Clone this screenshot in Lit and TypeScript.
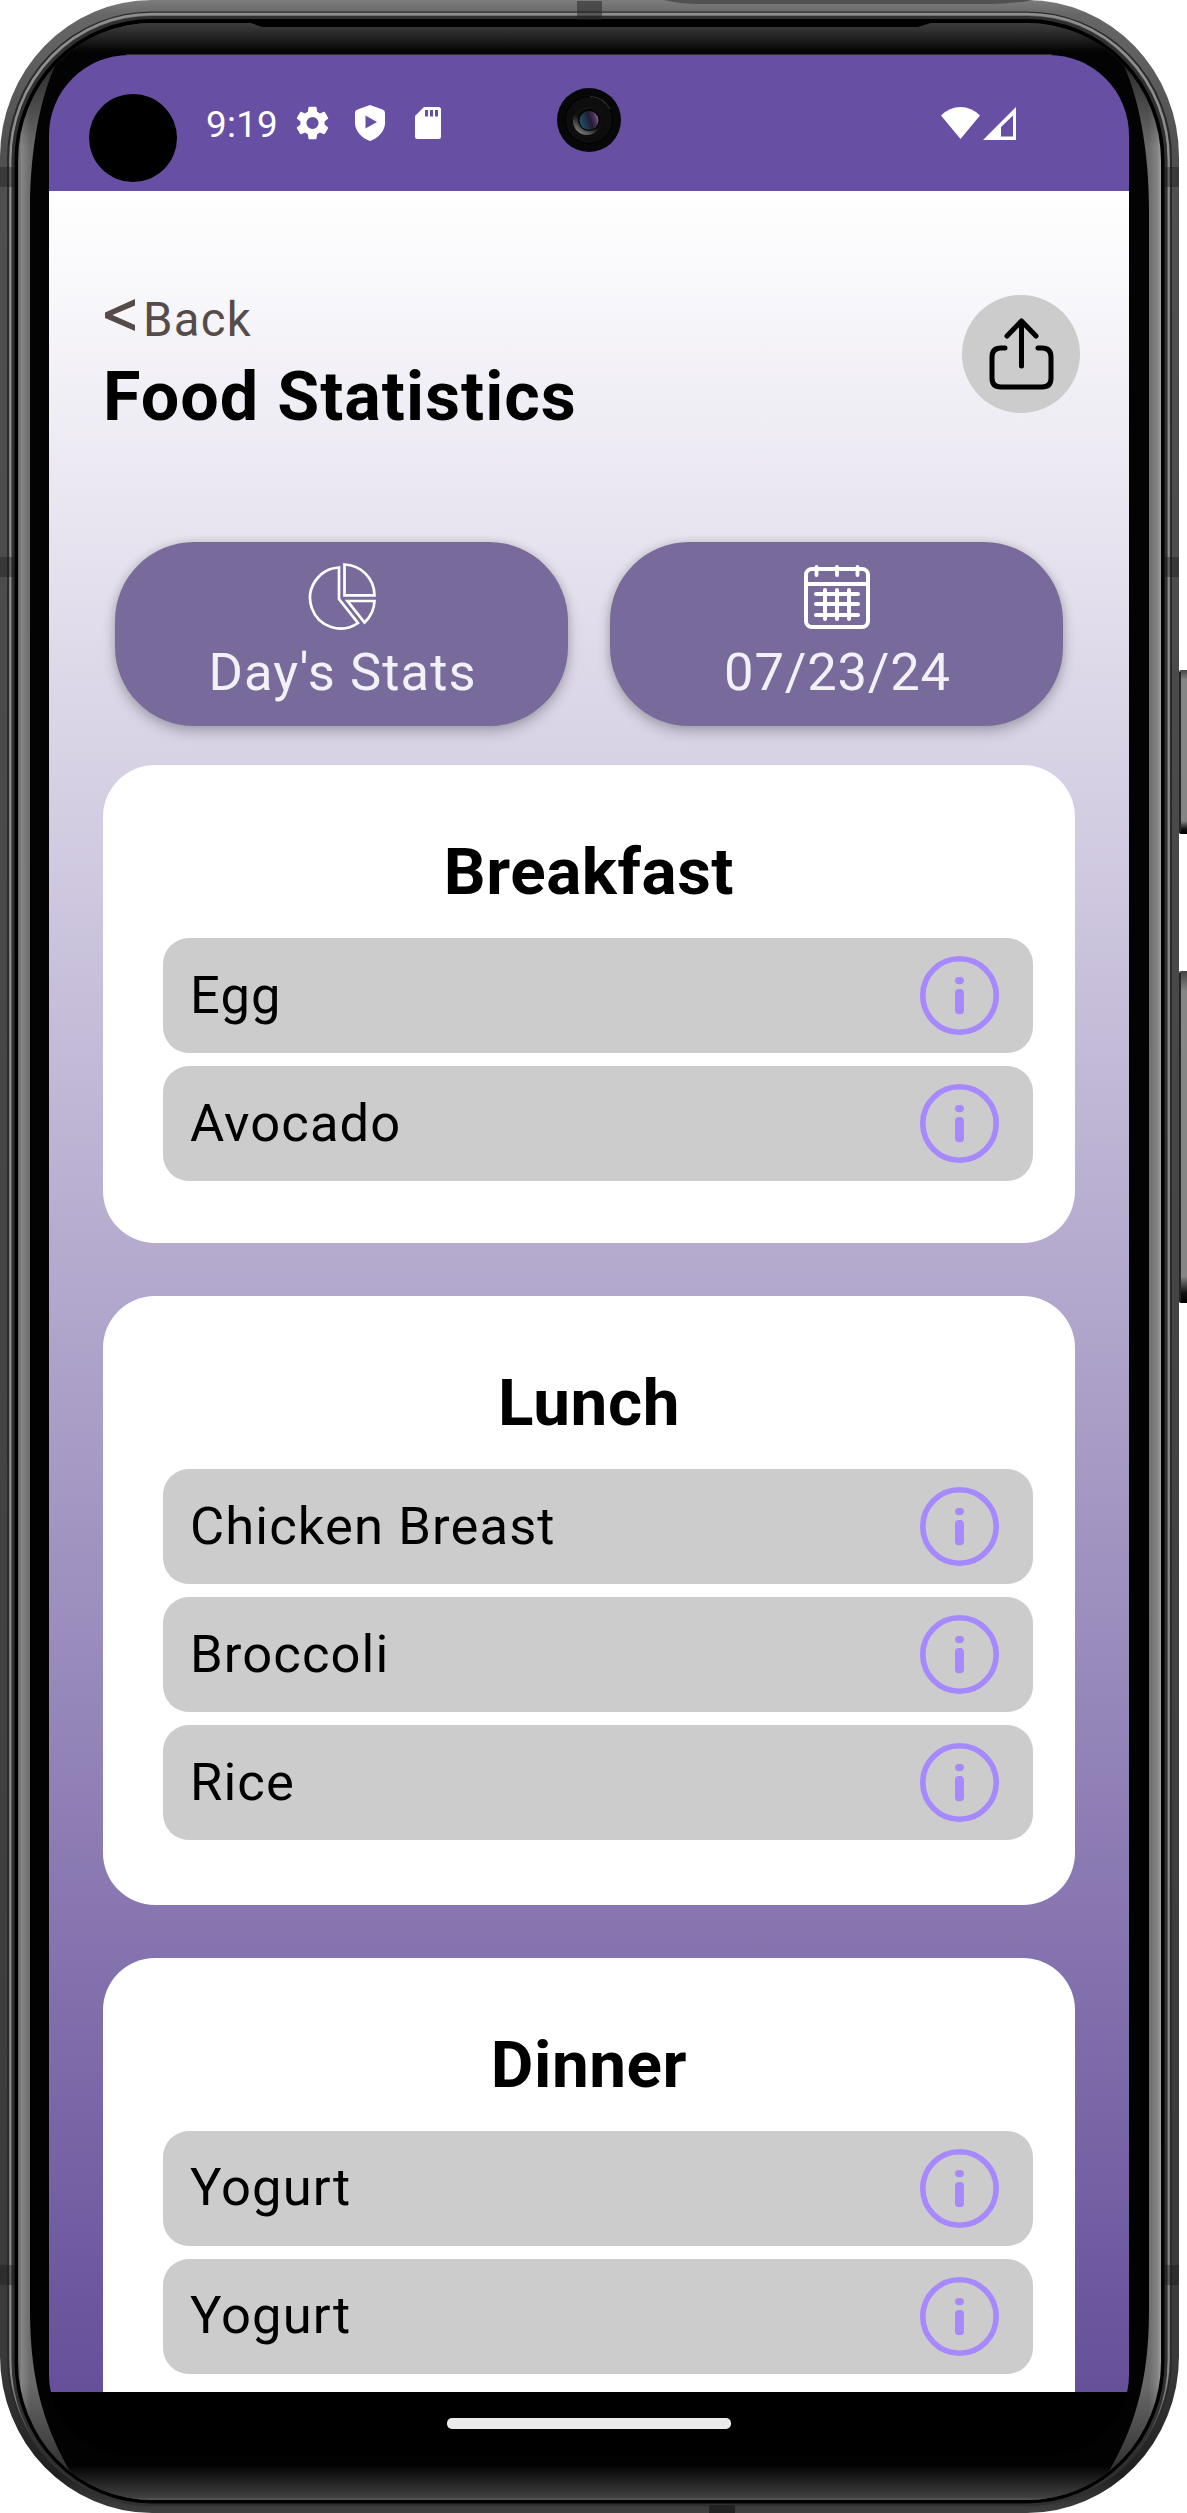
import { LitElement, html, css, svg } from "lit";
import { customElement, property } from "lit/decorators.js";

interface Meal {
  name: string;
  size: string;
  foods: string[];
}

const MEALS: Meal[] = [
  { name: "Breakfast", size: "two", foods: ["Egg", "Avocado"] },
  { name: "Lunch", size: "three", foods: ["Chicken Breast", "Broccoli", "Rice"] },
  { name: "Dinner", size: "three", foods: ["Yogurt", "Yogurt"] },
];

@customElement("device-frame")
class DeviceFrame extends LitElement {
  static styles = css`
    :host { display: block; width: 1187px; height: 2513px; }
    .art { display: block; }
  `;

  render() {
    const bands = [167, 557, 2265];
    return html`<svg class="art" width="1187" height="2513" viewBox="0 0 1187 2513">
      <defs>
        <linearGradient id="shell" x1="0" y1="0" x2="0" y2="1">
          <stop offset="0" stop-color="#7c7c7c" /><stop offset="0.006" stop-color="#666" />
          <stop offset="0.06" stop-color="#505050" /><stop offset="0.94" stop-color="#3a3a3a" />
          <stop offset="0.985" stop-color="#1f1f1f" /><stop offset="1" stop-color="#414141" />
        </linearGradient>
        <linearGradient id="rim" x1="0" y1="0" x2="0" y2="1">
          <stop offset="0" stop-color="#8f8f8f" /><stop offset="0.95" stop-color="#8a8a8a" />
          <stop offset="0.985" stop-color="#333" /><stop offset="1" stop-color="#2c2c2c" />
        </linearGradient>
        <linearGradient id="side" gradientUnits="userSpaceOnUse" x1="18" y1="0" x2="1161" y2="0">
          <stop offset="0" stop-color="#606060" /><stop offset="0.003" stop-color="#858585" />
          <stop offset="0.011" stop-color="#6a6a6a" /><stop offset="0.989" stop-color="#6a6a6a" />
          <stop offset="0.997" stop-color="#858585" /><stop offset="1" stop-color="#a0a0a0" />
        </linearGradient>
        <linearGradient id="fade" gradientUnits="userSpaceOnUse" x1="0" y1="50" x2="0" y2="2480">
          <stop offset="0" stop-color="#000" stop-opacity="0.7" /><stop offset="0.04" stop-color="#000" stop-opacity="0" />
          <stop offset="0.96" stop-color="#000" stop-opacity="0" /><stop offset="1" stop-color="#000" stop-opacity="0.6" />
        </linearGradient>
        <linearGradient id="glass" gradientUnits="userSpaceOnUse" x1="0" y1="23" x2="0" y2="2500">
          <stop offset="0" stop-color="#3d3d3d" /><stop offset="0.0052" stop-color="#262626" />
          <stop offset="0.0115" stop-color="#030303" /><stop offset="0.986" stop-color="#020202" />
          <stop offset="0.9915" stop-color="#1d1d1d" /><stop offset="1" stop-color="#454545" />
        </linearGradient>
        <linearGradient id="key" x1="0" y1="0" x2="0" y2="1">
          <stop offset="0" stop-color="#444" /><stop offset="0.06" stop-color="#858585" />
          <stop offset="0.92" stop-color="#858585" /><stop offset="0.97" stop-color="#111" />
          <stop offset="1" stop-color="#000" />
        </linearGradient>
        <clipPath id="face"><rect x="18" y="23" width="1143" height="2477" rx="134" ry="138" /></clipPath>
        <clipPath id="body"><rect x="0" y="0" width="1179" height="2513" rx="152" ry="157" /></clipPath>
      </defs>
      <rect x="0" y="0" width="1179" height="2513" rx="152" ry="157" fill="url(#shell)" />
      <g clip-path="url(#body)">
        <path d="M664 0H1034Q1010 4 990 4H700Q680 4 664 0Z" fill="#505050" />
        <rect x="8" y="12.5" width="1163" height="2492" rx="144" ry="146" fill="none" stroke="#2b2b2b" stroke-width="2" />
        <rect x="10.5" y="14" width="1158" height="2489.5" rx="141" ry="145" fill="none" stroke="url(#rim)" stroke-width="2.5" />
        <rect x="13.5" y="18" width="1152" height="2486" rx="138" ry="142" fill="none" stroke="#303030" stroke-width="4" />
        <rect x="16" y="20.5" width="1147" height="2481.5" rx="136" ry="140" fill="#000" stroke="#000" stroke-width="3" />
        ${bands.map((y) => svg`<rect x="0" y=${y} width="15" height="20" fill="#171717" opacity="0.38" /><rect x="1164" y=${y} width="15" height="20" fill="#171717" opacity="0.38" />`)}
        <rect x="577" y="1" width="25" height="19" fill="#222" opacity="0.5" />
        <rect x="709" y="2505" width="26" height="8" fill="#222" />
      </g>
      <g clip-path="url(#face)">
        <rect x="18" y="23" width="1143" height="2477" fill="url(#side)" />
        <rect x="18" y="23" width="1143" height="2477" fill="url(#fade)" />
        <path d="M30 210C30 150 40 95 59 57L75 20H1104L1120 57C1139 95 1149 150 1149 210V2310C1149 2385 1133 2430 1107 2475L1090 2505H89L72 2475C46 2430 30 2385 30 2310Z" fill="url(#glass)" />
        <path d="M248 22H934L918 27H262Z" fill="#000" />
        <path d="M100 2499H1080" stroke="#565656" stroke-width="1.5" />
      </g>
      <path d="M126 54.5H1052" stroke="#333" />
      <rect x="1179" y="670" width="12" height="164" rx="2" fill="url(#key)" />
      <rect x="1179" y="971" width="12" height="332" rx="2" fill="url(#key)" />
      <path d="M1180 672V832M1180 973V1301" stroke="#242424" stroke-width="2" />
    </svg>`;
  }
}

@customElement("camera-lens")
class CameraLens extends LitElement {
  static styles = css`
    :host { display: block; width: 64px; height: 64px; }
    .lens { display: block; }
  `;

  render() {
    return html`<svg class="lens" width="64" height="64" viewBox="0 0 64 64">
      <defs>
        <linearGradient id="ring" x1="0.2" y1="0.9" x2="0.7" y2="0.1">
          <stop offset="0" stop-color="#777" /><stop offset="0.5" stop-color="#111" />
        </linearGradient>
        <linearGradient id="pupil" x1="0" y1="0.6" x2="1" y2="0.3">
          <stop offset="0" stop-color="#1d5468" /><stop offset="0.55" stop-color="#211c35" />
          <stop offset="0.8" stop-color="#4a3458" /><stop offset="1" stop-color="#a06cac" />
        </linearGradient>
      </defs>
      <circle cx="32" cy="32" r="32" fill="#070707" />
      <circle cx="32" cy="32" r="23.5" fill="#0d0d0d" stroke="#000" />
      <path d="M33 8.5A24 24 0 0 1 53 21" fill="none" stroke="#303030" stroke-width="1.2" />
      <circle cx="30" cy="33" r="14" fill="url(#ring)" />
      <circle cx="32" cy="32" r="11" fill="#050505" />
      <circle cx="32" cy="32.5" r="9.5" fill="url(#pupil)" />
    </svg>`;
  }
}

@customElement("food-row")
class FoodRow extends LitElement {
  @property() label = "";

  static styles = css`
    :host { display: block; }
    .row {
      display: flex; align-items: center; justify-content: space-between;
      height: 115px; box-sizing: border-box; padding: 0 34px 0 27px;
      background: #ccc; border-radius: 26px;
    }
    .label { font-size: 52.5px; line-height: 62px; letter-spacing: 1.12px; color: #000; margin-bottom: 2px; }
    .info { display: block; }
  `;

  render() {
    return html`<div class="row">
      <span class="label">${this.label}</span>
      <svg class="info" width="79" height="79" viewBox="0 0 79 79" fill="#a688ff">
        <circle cx="39.5" cy="39.5" r="36.7" fill="none" stroke="#a688ff" stroke-width="5.6" />
        <rect x="35" y="21" width="9" height="7.2" rx="4" ry="3.6" />
        <rect x="35" y="33" width="9" height="25.2" rx="4" />
      </svg>
    </div>`;
  }
}

@customElement("app-root")
class AppRoot extends LitElement {
  static styles = css`
    :host { display: block; font-family: Roboto, sans-serif; }
    .device { position: relative; width: 1187px; height: 2513px; overflow: hidden; background: #fff; display: flex; }
    .frame { position: absolute; inset: 0; }
    .screen {
      position: relative; width: 1080px; height: 2400px; margin: 55px 0 0 49px;
      border-radius: 80px; overflow: hidden; background: #000;
      display: flex; flex-direction: column; flex: none;
    }
    .status {
      height: 136px; flex: none; box-sizing: border-box; background: #6750a3; color: #fff;
      display: flex; align-items: center; padding: 0 113px 0 157px;
    }
    .clock { font-size: 36.75px; line-height: 44px; width: 90px; margin-top: 3px; letter-spacing: 0.3px; }
    .group { display: flex; align-items: center; gap: 26px; }
    .signals { display: flex; align-items: center; gap: 3px; margin-left: auto; }
    .status svg { display: block; }
    .hole { position: absolute; left: 40px; top: 39px; width: 88px; height: 88px; border-radius: 50%; background: #000; }
    .camera { position: absolute; left: 508px; top: 33px; }
    .content {
      height: 2201px; flex: none; box-sizing: border-box; overflow: hidden; padding: 104px 54px 0;
      background: linear-gradient(#fff, #66509a);
      display: flex; flex-direction: column;
    }
    .header { display: flex; flex: none; justify-content: space-between; height: 247px; margin-right: -5px; }
    .back { display: flex; align-items: flex-start; height: 46px; color: #554b4b; }
    .chevron { display: block; margin: 4px 8px 0 2px; }
    .backlabel { font-size: 47.25px; line-height: 56px; letter-spacing: 1.31px; margin-top: -3px; }
    .title { margin: 16px 0 0; font-size: 68.25px; line-height: 80px; font-weight: 700; letter-spacing: 1px; color: #000; }
    .share {
      width: 118px; height: 118px; border-radius: 50%; background: #ccc;
      display: flex; align-items: center; justify-content: center;
    }
    .actions { display: flex; flex: none; gap: 42px; margin: 0 12px 39px 12px; }
    .action {
      flex: 1; height: 184px; border-radius: 79px; background: #786b9c; color: #f3f1f8;
      display: flex; flex-direction: column; align-items: center; box-sizing: border-box; padding-top: 20px;
      box-shadow: 0 6px 14px rgba(0, 0, 0, 0.22), 0 0 8px rgba(0, 0, 0, 0.12);
    }
    .action svg { display: block; height: 68px; flex: none; }
    .caption { font-size: 52.5px; line-height: 62px; letter-spacing: 1.08px; margin-top: 11px; padding-left: 2px; }
    .date { letter-spacing: 0.8px; }
    .meals { display: flex; flex-direction: column; gap: 53px; }
    .card { background: #fff; border-radius: 52px; padding: 68px 42px 0 60px; box-sizing: border-box; flex: none; }
    .two { height: 478px; }
    .three { height: 608.5px; }
    .meal {
      margin: 0 -42px 0 -60px; height: 105px; text-align: center;
      font-size: 65.6px; line-height: 78px; font-weight: 700; letter-spacing: 0.55px; color: #000;
    }
    .rows { display: flex; flex-direction: column; gap: 13px; }
    .nav { flex: 1; display: flex; justify-content: center; padding-top: 26px; background: #000; }
    .pill { width: 284px; height: 11px; border-radius: 5px; background: #ebebeb; }
  `;

  statusBar() {
    return html`<div class="status">
      <span class="clock">9:19</span>
      <div class="group">
        <svg width="33" height="34" viewBox="2.2 2 19.6 20" fill="#fff"><path d="M19.14 12.94c.04-.3.06-.61.06-.94 0-.32-.02-.64-.07-.94l2.03-1.58c.18-.14.23-.41.12-.61l-1.92-3.32c-.12-.22-.37-.29-.59-.22l-2.39.96c-.5-.38-1.03-.7-1.62-.94l-.36-2.54c-.04-.24-.24-.41-.48-.41h-3.84c-.24 0-.43.17-.47.41l-.36 2.54c-.59.24-1.13.57-1.62.94l-2.39-.96c-.22-.08-.47 0-.59.22L2.74 8.87c-.12.21-.08.47.12.61l2.03 1.58c-.05.3-.09.63-.09.94s.02.64.07.94l-2.03 1.58c-.18.14-.23.41-.12.61l1.92 3.32c.12.22.37.29.59.22l2.39-.96c.5.38 1.03.7 1.62.94l.36 2.54c.05.24.24.41.48.41h3.84c.24 0 .44-.17.47-.41l.36-2.54c.59-.24 1.13-.56 1.62-.94l2.39.96c.22.08.47 0 .59-.22l1.92-3.32c.12-.22.07-.47-.12-.61l-2.01-1.58zM12 15.6A3.6 3.6 0 1 1 12 8.4a3.6 3.6 0 0 1 0 7.2z" /></svg>
        <svg width="30" height="36" viewBox="0 0 30 36"><path d="M15 0L27.5 4.6Q30 5.6 30 8V18C30 26 23 33.500 15 36C7 33.500 0 26 0 18V8Q0 5.600 2.500 4.600Z" fill="#fff" /><path d="M10.500 10.500L22 17L10.500 23.500Z" fill="#6750a3" /></svg>
        <svg width="34" height="32" viewBox="-4 0 34 32"><path d="M9 0H23.500Q26 0 26 2.500V29.500Q26 32 23.500 32H2.500Q0 32 0 29.500V9Z" fill="#fff" /><path d="M11.500 3V9.500M16.500 3V9.500M21.500 3V9.500" stroke="#6750a3" stroke-width="3" /></svg>
      </div>
      <div class="signals">
        <svg width="39" height="32" viewBox="0 0 39 32"><path d="M0 8.500Q8.500 0 19.500 0Q30.500 0 39 8.500L19.500 32Z" fill="#fff" /></svg>
        <svg width="33" height="33" viewBox="0 0 33 33"><path fill-rule="evenodd" d="M33 0V33H0ZM30 8.500L18 20V29.500H30Z" fill="#fff" /></svg>
      </div>
    </div>`;
  }

  header() {
    return html`<div class="header">
      <div>
        <div class="back">
          <svg class="chevron" width="30" height="32" viewBox="0 0 30 32"><path d="M0 13.500L30 0V6.500L7.500 16L30 26V32L0 19Z" fill="#554b4b" /></svg>
          <span class="backlabel">Back</span>
        </div>
        <h1 class="title">Food Statistics</h1>
      </div>
      <div class="share">
        <svg width="66" height="72" viewBox="0 0 66 72" fill="none" stroke="#000" stroke-width="5" stroke-linecap="round" stroke-linejoin="round">
          <path d="M33.500 3V48M19 18L33.500 3L48 18M17 30H13Q4 30 4 39V60Q4 69 13 69H54Q63 69 63 60V39Q63 30 54 30H50" />
        </svg>
      </div>
    </div>`;
  }

  actions() {
    return html`<div class="actions">
      <div class="action">
        <svg width="68" height="68" viewBox="0 0 68 68" fill="none" stroke="#fff" stroke-width="2.700">
          <path d="M31 5.500V37L50 61A30.500 30.500 0 1 1 31 5.500Z" />
          <path d="M36.500 2.500V33.300H66.500A31 31 0 0 0 36.500 2.500Z" />
          <path d="M39.500 39H66.500A31 31 0 0 1 56.500 60.500Z" />
        </svg>
        <span class="caption">Day's Stats</span>
      </div>
      <div class="action">
        <svg width="68" height="68" viewBox="0 0 68 68" fill="none" stroke="#fff" stroke-width="4" stroke-linecap="round">
          <rect x="3" y="7" width="62" height="58" rx="6" />
          <path d="M3 22H65" />
          <path d="M13.500 5V13M34 5V13M54.500 5V13" stroke-width="3.800" />
          <path d="M13 32H55M13 42H55M13 53H55M22 28V57M34 28V57M46 28V57" />
        </svg>
        <span class="caption date">07/23/24</span>
      </div>
    </div>`;
  }

  render() {
    return html`<div class="device">
      <device-frame class="frame"></device-frame>
      <div class="screen">
        ${this.statusBar()}
        <div class="content">
          ${this.header()} ${this.actions()}
          <div class="meals">
            ${MEALS.map((m) => html`<section class="card ${m.size}">
              <h2 class="meal">${m.name}</h2>
              <div class="rows">${m.foods.map((f) => html`<food-row .label=${f}></food-row>`)}</div>
            </section>`)}
          </div>
        </div>
        <div class="nav"><div class="pill"></div></div>
        <div class="hole"></div>
        <camera-lens class="camera"></camera-lens>
      </div>
    </div>`;
  }
}
